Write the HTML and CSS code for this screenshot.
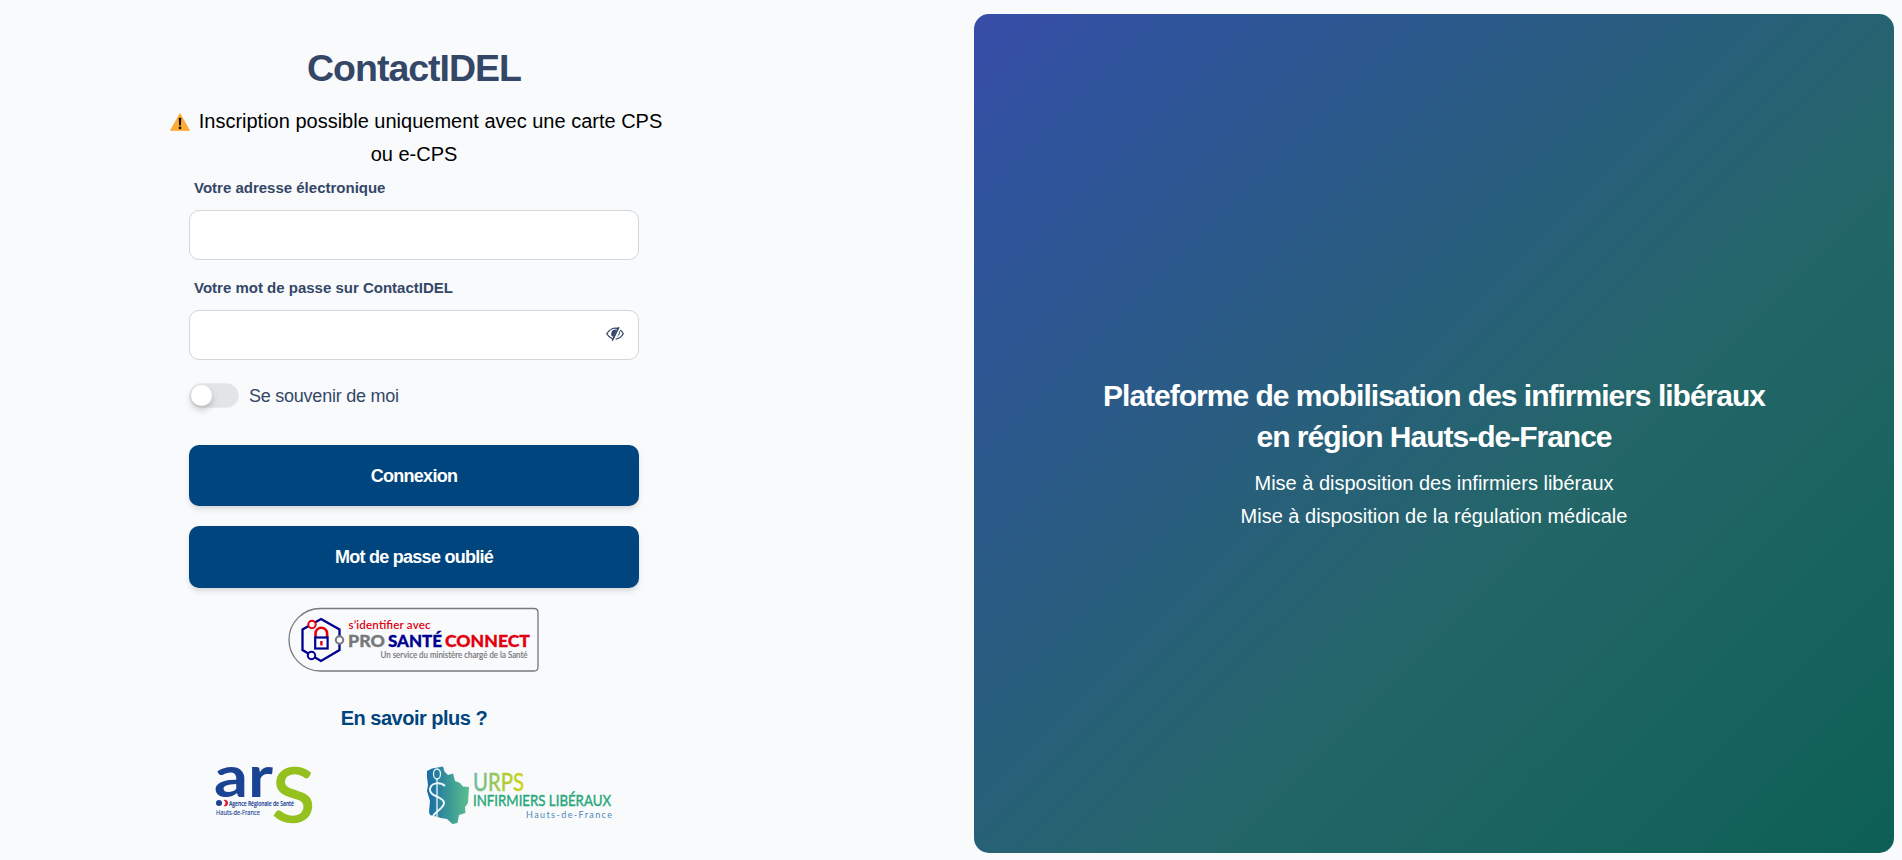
FILE: index.html
```html
<!DOCTYPE html>
<html lang="fr">
<head>
<meta charset="utf-8">
<title>ContactIDEL</title>
<link rel="stylesheet" href="styles.css">
</head>
<body>
<main class="page">
  <section class="login">
    <h1 class="title">ContactIDEL</h1>
    <p class="notice"><svg class="warn" viewBox="0 0 20 18"><path d="M10 .6 19.6 17.4H.4Z" fill="#ffac33" stroke="#ffac33" stroke-width=".8" stroke-linejoin="round"/><path d="M8.700 4.800h2.600l-.4 7.700H9.100Z" fill="#111"/><circle cx="10" cy="14.900" r="1.400" fill="#111"/></svg>Inscription possible uniquement avec une carte CPS<br>ou e-CPS</p>
    <form class="form">
      <label class="label" for="email">Votre adresse électronique</label>
      <div class="field"><input class="input" id="email" type="text"></div>
      <label class="label" for="pass">Votre mot de passe sur ContactIDEL</label>
      <div class="field"><input class="input" id="pass" type="password">
        <svg class="eye" viewBox="0 0 18 14" fill="none" stroke="#344767" stroke-width="1.3"><path d="M12.300 1.500C7 .2 2.800 3.300.8 6.800c1.300 2.300 3.200 4.100 5.600 4.900"/><path d="M14.200 2.900c1.300 1 2.300 2.300 3 3.900-1.600 3-4.200 5-7.600 5.300"/><path d="M12.900.2 6.200 13.700" stroke-width="1.600"/><path d="M11 2.600C6.500 1.800 4.600 5 5.400 8.200L7.300 10.200Z" fill="#344767" stroke="none"/><path d="M13.400 4.300c.4 2-.3 3.700-2 5" stroke-width="1"/></svg>
      </div>
      <div class="remember"><span class="switch"></span><span class="remember-text">Se souvenir de moi</span></div>
      <button class="button" type="button">Connexion</button>
      <button class="button" type="button">Mot de passe oublié</button>
    </form>
    <svg class="psc" viewBox="0 0 252 66">
      <path d="M32.500 1.500H246q4 0 4 4V60q0 4-4 4H32.500A31.500 31.250 0 0 1 32.500 1.500Z" fill="none" stroke="#77787b" stroke-width="1.300"/>
      <path d="M33 12 51.500 22.500V43L33 54 14.500 43V22.500Z" fill="none" stroke="#000091" stroke-width="2.300"/>
      <g fill="#f8fafc" stroke-width="2"><circle cx="24" cy="17.500" r="3.700" stroke="#e1000f"/><circle cx="51.500" cy="33" r="3.700" stroke="#77787b"/><circle cx="23.500" cy="48.500" r="3.700" stroke="#000091"/></g>
      <path d="M27.500 30v-3.500a5.800 5.800 0 0 1 11.600 0V30" fill="none" stroke="#e1000f" stroke-width="2.600"/>
      <rect x="27.200" y="30.500" width="12.400" height="11" fill="#fff" stroke="#000091" stroke-width="2.200"/>
      <path d="M33.400 34v4.500" stroke="#e1000f" stroke-width="2.400"/>
      <g class="geo">
        <text x="60.500" y="22" font-size="11.500" font-weight="600" fill="#e1000f" textLength="82">s’identifier avec</text>
        <g font-size="17.500" font-weight="900" stroke-width=".3"><text x="60" y="39.500" fill="#77787b" stroke="#77787b" textLength="37" lengthAdjust="spacingAndGlyphs">PRO</text><text x="100" y="39.500" fill="#000091" stroke="#000091" textLength="54" lengthAdjust="spacingAndGlyphs">SANTÉ</text><text x="157" y="39.500" fill="#e1000f" stroke="#e1000f" textLength="85" lengthAdjust="spacingAndGlyphs">CONNECT</text></g>
        <text x="92.500" y="50.500" font-size="8.500" fill="#77787b" stroke="#77787b" stroke-width=".2" textLength="147" lengthAdjust="spacingAndGlyphs">Un service du ministère chargé de la Santé</text>
      </g>
    </svg>
    <a class="more">En savoir plus ?</a>
    <div class="logos">
      <svg class="ars" viewBox="0 0 100 62">
        <g class="geo"><text x="-2" y="30.500" font-size="57" font-weight="700" fill="#1b4394" textLength="59" lengthAdjust="spacingAndGlyphs">ar</text><text x="56" y="56" font-size="76" fill="#95c11f" stroke="#95c11f" stroke-width="1.500" textLength="43" lengthAdjust="spacingAndGlyphs">S</text></g>
        <circle cx="3" cy="37" r="3" fill="#1b4394"/><path d="M7.500 34q4 3 0 6a3.300 3.300 0 1 0 0-6" fill="#e1202f"/>
        <g class="cond" fill="#1b4394" font-size="7" stroke="#1b4394" stroke-width=".15"><text x="13" y="39.500" font-weight="600" textLength="65" lengthAdjust="spacingAndGlyphs">Agence Régionale de Santé</text><text x="0" y="48.500" textLength="44" lengthAdjust="spacingAndGlyphs">Hauts-de-France</text></g>
      </svg>
      <svg class="urps" viewBox="0 0 188 62">
        <defs><linearGradient id="map"><stop stop-color="#176ba5"/><stop offset="1" stop-color="#5bc08b"/></linearGradient><linearGradient id="name"><stop stop-color="#65bba5"/><stop offset=".55" stop-color="#a4cb3d"/><stop offset="1" stop-color="#cfd31c"/></linearGradient></defs>
        <path d="M1 5 6 2.500l11-2 1.500 5L22 9l5-1.500 2 7.500 5 2 3 3.500 6 .5-1 16-3 4 .5 6-6.500 2-1.500 8-5 1-5.500-5-6-1-5-1.500L4 49l-1-3 1-11-3-10 1-6-1-8Z" fill="url(#map)"/>
        <g fill="none" stroke="#eef8fb" stroke-width="1.300"><ellipse cx="11" cy="8" rx="3.500" ry="5"/><path d="M11 13v38"/><path d="M19 20C15 16 5 16 4 23c-1 8 14 7 14 14 0 5-8 8-11 13" stroke-width="2"/></g>
        <g class="geo"><text x="47" y="25" font-size="25" fill="url(#name)" stroke="url(#name)" stroke-width=".5" textLength="51" lengthAdjust="spacingAndGlyphs">URPS</text><text x="47" y="40" font-size="16" fill="#27a779" stroke="#27a779" stroke-width=".4" textLength="138" lengthAdjust="spacingAndGlyphs">INFIRMIERS LIBÉRAUX</text><text x="100" y="51.500" font-size="9" fill="#4b87bb" textLength="86">Hauts-de-France</text></g>
      </svg>
    </div>
  </section>
  <section class="hero">
    <h2 class="hero-title">Plateforme de mobilisation des infirmiers libéraux<br>en région Hauts-de-France</h2>
    <p class="hero-text">Mise à disposition des infirmiers libéraux<br>Mise à disposition de la régulation médicale</p>
  </section>
</main>
</body>
</html>
```
FILE: styles.css
```css
* { box-sizing: border-box; }
body { margin: 0; background: #f8fafc; font-family: "Liberation Sans", Arial, sans-serif; color: #344767; }
.page { display: flex; height: 860px; padding: 14px 8px 7px 0; overflow: hidden; }
.login { width: 828px; margin-right: 146px; display: flex; flex-direction: column; align-items: center; padding-top: 30px; }
.title { margin: 0; font-size: 37.5px; line-height: 48px; letter-spacing: -1px; }
.notice { margin: 13px 0 0; color: #000; font-size: 20px; line-height: 33px; text-align: center; white-space: nowrap; }
.warn { width: 20px; height: 18px; margin: 0 9px 0 4px; vertical-align: -3px; }
.form { width: 450px; display: flex; flex-direction: column; }
.label { margin: 5px 0 0 5px; font-size: 15px; font-weight: 700; line-height: 24px; height: 34px; }
.label ~ .label { margin-top: 6px; }
.field { height: 60px; position: relative; }
.input { display: block; width: 100%; height: 50px; border: 1px solid #d2d6da; border-radius: 10px; background: #fff; padding: 0 12px; }
.eye { position: absolute; right: 15px; top: 17px; width: 18px; height: 14px; }
.remember { display: flex; align-items: center; gap: 10px; height: 25px; margin-top: 13px; font-size: 18px; letter-spacing: -.24px; }
.remember-text { padding-top: 2px; }
.switch { width: 50px; height: 25px; border: 1px solid #e9ecef; border-radius: 13px; background: #e2e4e6; padding: 1px; }
.switch::after { content: ""; display: block; width: 21px; height: 21px; border-radius: 50%; background: #fff; box-shadow: 0 4px 7px rgba(0,0,0,.2); }
.button { height: 61px; margin: 37px 0 0; padding: 2px 0 0; border: 0; border-radius: 10px; background: #00457e; color: #fff; font: 700 18px "Liberation Sans", Arial, sans-serif; letter-spacing: -.74px; box-shadow: 0 4px 7px -1px rgba(0,0,0,.11), 0 2px 4px -1px rgba(0,0,0,.07); }
.button + .button { height: 62px; margin-top: 20px; padding-top: 0; }
.psc { width: 252px; height: 66px; margin-top: 19px; }
.geo { font-family: Lato, sans-serif; }
.cond { font-family: "Open Sans", sans-serif; }
.more { margin-top: 29px; font-size: 20px; line-height: 32px; font-weight: 700; letter-spacing: -.5px; color: #00457e; }
.logos { display: flex; width: 398px; margin: 32px 0 0 2px; justify-content: space-between; }
.ars { width: 100px; height: 62px; overflow: visible; }
.urps { width: 188px; height: 62px; overflow: visible; }
.hero { width: 920px; display: flex; flex-direction: column; align-items: center; justify-content: center; padding-top: 41px; border-radius: 15px; background: linear-gradient(135deg, #384da9 0%, #30549c 12%, #295d80 38%, #246669 60%, #0d6055 100%); color: #fff; text-align: center; }
.hero-title { margin: 0; font-size: 30px; line-height: 41px; letter-spacing: -1px; white-space: nowrap; }
.hero-text { margin: 10px 0 0; font-size: 20px; line-height: 33px; }
```
